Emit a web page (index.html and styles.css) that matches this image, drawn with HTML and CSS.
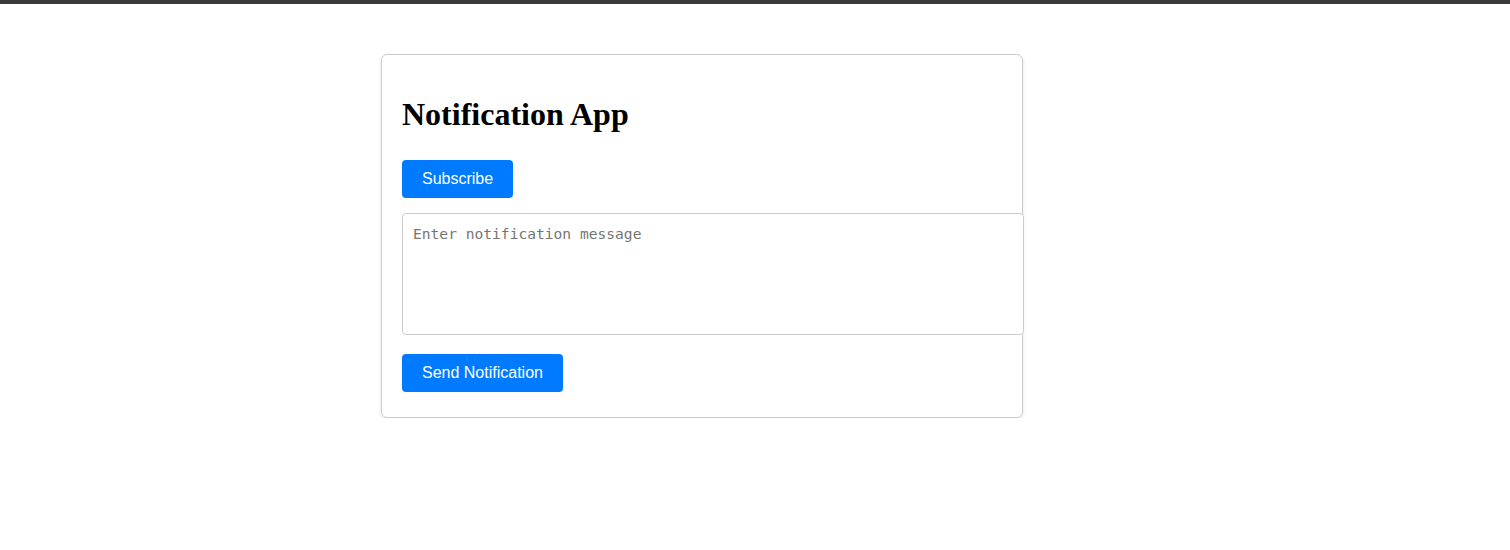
FILE: index.html
```html
<!DOCTYPE html>
<html>
<head>
<meta charset="utf-8">
<link rel="stylesheet" href="styles.css">
</head>
<body>
<div class="topbar"></div>
<div class="page">
  <div class="card">
    <h1 class="title">Notification App</h1>
    <button class="btn">Subscribe</button>
    <textarea class="message" placeholder="Enter notification message"></textarea>
    <button class="btn">Send Notification</button>
  </div>
</div>
</body>
</html>
```
FILE: styles.css
```css
html, body {
  margin: 0;
  padding: 0;
  background: #fff;
}
body {
  font-family: "Liberation Serif", "Times New Roman", serif;
  font-size: 16px;
}
.topbar {
  height: 4px;
  background: #3a3a3a;
}
.page {
  padding: 50px 0 0 381px;
}
.card {
  width: 600px;
  padding: 20px;
  border: 1px solid #ccc;
  border-radius: 6px;
  box-shadow: 0 2px 4px rgba(0, 0, 0, 0.1);
}
.title {
  font-size: 32px;
  font-weight: bold;
  margin: 21px 0 27px;
}
.btn {
  display: block;
  margin: 5px 0;
  padding: 10px 20px;
  background: #007bff;
  color: #fff;
  border: none;
  border-radius: 4px;
  font-family: "Liberation Sans", Arial, sans-serif;
  font-size: 16px;
  line-height: 18px;
  cursor: pointer;
}
.message {
  display: block;
  box-sizing: content-box;
  width: 600px;
  height: 100px;
  margin: 15px 0 19px;
  padding: 10px;
  border: 1px solid #ccc;
  border-radius: 4px;
  font-family: "DejaVu Sans Mono", monospace;
  font-size: 14.6px;
  line-height: 20px;
  resize: none;
}
.message::placeholder {
  color: #757575;
}
```
